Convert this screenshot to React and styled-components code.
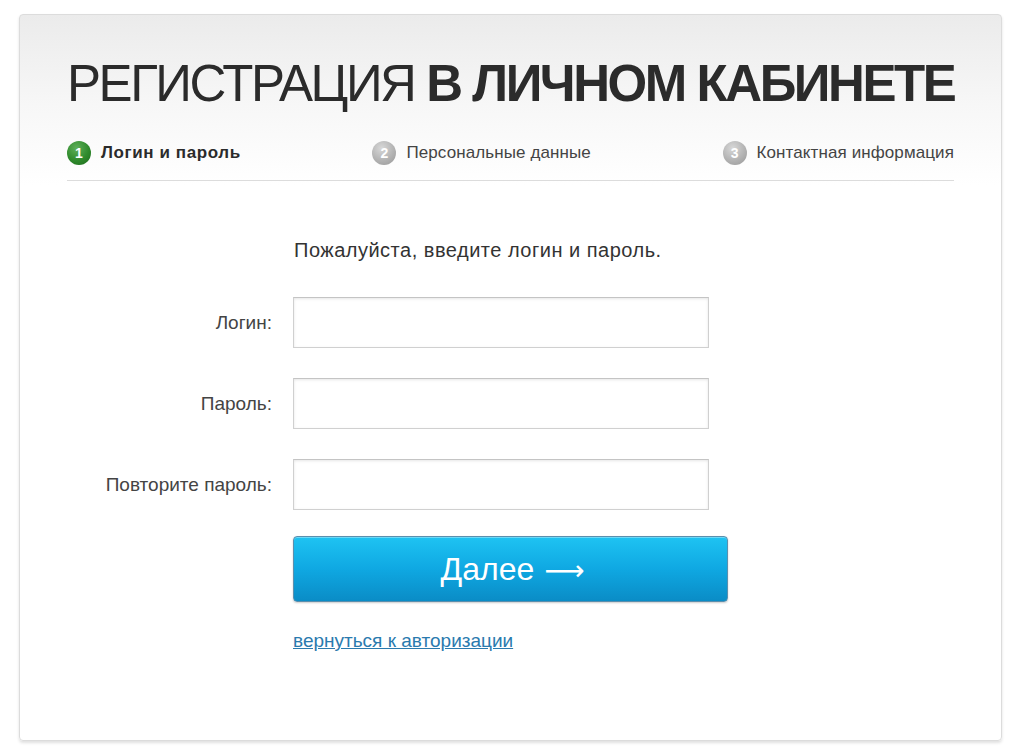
import styled, { createGlobalStyle } from "styled-components"

const Global = createGlobalStyle`
  html, body {
    margin: 0;
    padding: 0;
    background: #ffffff;
    font-family: "Liberation Sans", Arial, sans-serif;
  }
`

const steps = [
  { num: 1, text: "Логин и пароль", active: true },
  { num: 2, text: "Персональные данные" },
  { num: 3, text: "Контактная информация" },
]

const fields = ["Логин:", "Пароль:", "Повторите пароль:"]

export default function App() {
  return (
    <>
      <Global />
      <Page>
        <Card>
          <Title>
            РЕГИСТРАЦИЯ <b>В ЛИЧНОМ КАБИНЕТЕ</b>
          </Title>
          <Steps>
            {steps.map((s) => (
              <Step key={s.num} $active={s.active}>
                <StepNum $active={s.active}>{s.num}</StepNum>
                {s.text}
              </Step>
            ))}
          </Steps>
          <Form>
            <Intro>Пожалуйста, введите логин и пароль.</Intro>
            {fields.map((f) => (
              <Row key={f}>
                <Label>{f}</Label>
                <Input type={f === "Логин:" ? "text" : "password"} />
              </Row>
            ))}
            <Row>
              <span />
              <NextButton>
                Далее <Arrow>⟶</Arrow>
              </NextButton>
            </Row>
            <Row>
              <span />
              <BackLink href="#">вернуться к авторизации</BackLink>
            </Row>
          </Form>
        </Card>
      </Page>
    </>
  )
}

const Page = styled.div`
  box-sizing: border-box;
  width: 1024px;
  height: 756px;
  padding: 14px 22px 15px 19px;
`

const Card = styled.div`
  box-sizing: border-box;
  height: 727px;
  border: 1px solid #dcdcdc;
  border-radius: 4px;
  box-shadow: 0 2px 3px rgba(0, 0, 0, 0.12);
  background: linear-gradient(to bottom, #ebebeb 0px, #f7f7f7 90px, #ffffff 170px);
  padding: 0 47px;
`

const Title = styled.h1`
  margin: 0;
  padding-top: 39px;
  font-size: 51px;
  line-height: 60px;
  font-weight: normal;
  color: #2b2b2b;
  letter-spacing: -2.45px;
  white-space: nowrap;

  b {
    font-weight: bold;
  }
`

const Steps = styled.div`
  display: flex;
  justify-content: space-between;
  align-items: center;
  margin-top: 27px;
  padding-bottom: 15px;
  border-bottom: 1px solid #dcdcdc;
`

const Step = styled.div`
  display: flex;
  align-items: center;
  gap: 10px;
  font-size: 17px;
  color: ${(p) => (p.$active ? "#2b2b2b" : "#444444")};
  font-weight: ${(p) => (p.$active ? "bold" : "normal")};
  letter-spacing: ${(p) => (p.$active ? "0.6px" : "0.1px")};
`

const StepNum = styled.span`
  display: flex;
  align-items: center;
  justify-content: center;
  width: 24px;
  height: 24px;
  border-radius: 50%;
  color: #ffffff;
  font-size: 14px;
  font-weight: bold;
  letter-spacing: 0;
  background: ${(p) =>
    p.$active
      ? "radial-gradient(circle at 40% 30%, #5fb05a 0%, #2f8a2c 55%, #1d6a1b 100%)"
      : "radial-gradient(circle at 40% 30%, #d8d8d8 0%, #b3b3b3 55%, #969696 100%)"};
`

const Form = styled.div`
  display: flex;
  flex-direction: column;
  padding-top: 56px;
`

const Intro = styled.div`
  margin-left: 227px;
  font-size: 20px;
  letter-spacing: 0.5px;
  color: #333333;
  line-height: 26px;
  margin-bottom: 34px;
`

const Row = styled.div`
  display: grid;
  grid-template-columns: 205px auto;
  column-gap: 21px;
  align-items: center;
  justify-items: start;
  margin-bottom: 30px;
`

const Label = styled.label`
  justify-self: end;
  font-size: 19px;
  color: #444444;
`

const Input = styled.input`
  box-sizing: border-box;
  width: 416px;
  height: 51px;
  border: 1px solid #d0d0d0;
  border-top-color: #c4c4c4;
  box-shadow: inset 0 1px 3px rgba(0, 0, 0, 0.1);
  background: #ffffff;
  outline: none;
  font-size: 16px;
  padding: 0 10px;
`

const NextButton = styled.button`
  box-sizing: border-box;
  display: flex;
  align-items: center;
  justify-content: center;
  gap: 10px;
  width: 435px;
  height: 66px;
  margin-top: -4px;
  border: 1px solid #5a8fae;
  border-radius: 4px;
  background: linear-gradient(to bottom, #1ec3f2 0%, #0fa8e2 50%, #0a8cc6 100%);
  box-shadow: inset 0 1px 0 rgba(255, 255, 255, 0.35), 0 1px 2px rgba(0, 0, 0, 0.2);
  color: #ffffff;
  font-family: "Liberation Sans", Arial, sans-serif;
  font-size: 32px;
  cursor: pointer;
  padding: 0 0 0 4px;
`

const Arrow = styled.span`
  font-family: "DejaVu Sans", sans-serif;
  font-size: 28px;
  margin-top: 2px;
`

const BackLink = styled.a`
  margin-top: -2px;
  font-size: 19px;
  color: #2a7aae;
  text-decoration: underline;
`
